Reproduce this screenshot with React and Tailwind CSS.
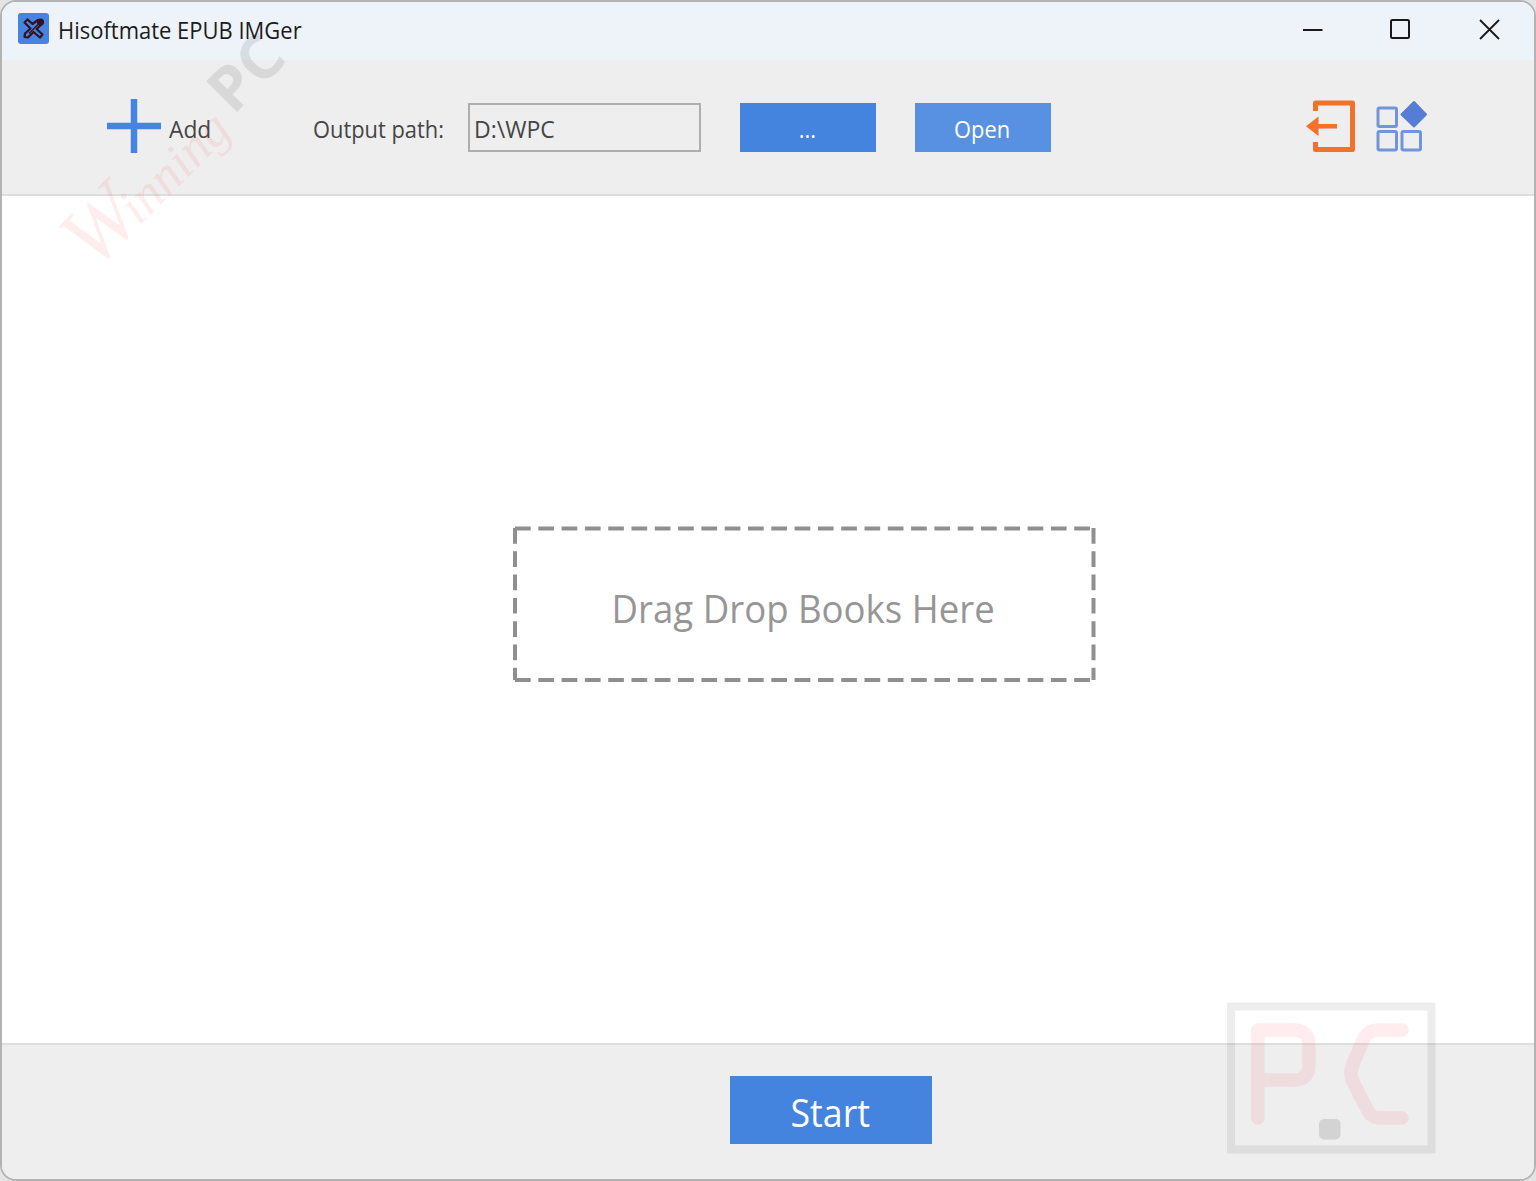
import React from 'react';

const AppIcon = () => (
  <svg className="w-[31px] h-[31px]" viewBox="0 0 31 31" fill="none">
    <rect width="31" height="31" rx="3" fill="#4584e3" />
    <g stroke="#33121d" strokeWidth="2.2" strokeLinejoin="round">
      <path d="M6.500 9.500L9.500 6.500L14.500 11L20 7L24 11L18.500 16L24.500 21.500L22 24.500L15.500 19L10 24.500L6.500 24L7 20.500L12.500 15.500Z" />
      <path d="M11 20.500L20.500 11" strokeWidth="1.5" />
      <circle cx="22.500" cy="9" r="2.500" fill="#33121d" />
    </g>
  </svg>
);

const ExitIcon = () => (
  <svg className="w-[50px] h-[54px]" viewBox="0 0 50 54" fill="none">
    <path d="M9.5 12V4H46.5V50.5H9.5V43" stroke="#f2712b" strokeWidth="5" strokeLinejoin="round" />
    <path d="M10 27.3H31" stroke="#f2712b" strokeWidth="4.5" />
    <path d="M0 27.3L12.5 17.5V37Z" fill="#f2712b" />
  </svg>
);

const AppsIcon = () => (
  <svg className="w-[52px] h-[54px]" viewBox="0 0 52 54" fill="none">
    <g stroke="#7394dd" strokeWidth="3">
      <rect x="2" y="9" width="18.5" height="18.5" rx="1.5" />
      <rect x="2" y="32.5" width="18.5" height="18.5" rx="1.5" />
      <rect x="26" y="32.5" width="18.5" height="18.5" rx="1.5" />
    </g>
    <path d="M38 3L50 15.5L38 27.5L25.5 15.5Z" fill="#567dd5" stroke="#567dd5" strokeWidth="2" strokeLinejoin="round" />
  </svg>
);

const WindowControls = () => (
  <svg className="w-[200px] h-[24px]" viewBox="0 0 200 24" fill="none" stroke="#191919" strokeWidth="2">
    <path d="M3 13H22.5" />
    <rect x="91" y="3" width="18" height="18" rx="1.5" />
    <path d="M180 3L199 22M199 3L180 22" strokeWidth="1.8" />
  </svg>
);

const DropZone = () => (
  <div className="relative w-[584px] h-[156px] flex items-center justify-center">
    <svg className="absolute inset-0 w-full h-full" viewBox="0 0 584 156" stroke="#8f8f8f" strokeWidth="4" strokeDasharray="15.7 7.6">
      <path d="M2 2.4H577" />
      <path d="M2 2V154" />
      <path d="M2 154H577" />
      <path d="M580.5 2V154" />
    </svg>
    <span className="mt-[7px] mr-[3px] text-[38px] leading-[52px] text-[#969696] whitespace-nowrap scale-x-[0.962]">
      Drag Drop Books Here
    </span>
  </div>
);

const Watermarks = () => (
  <div className="absolute inset-0 pointer-events-none">
    <svg className="w-full h-full" viewBox="0 0 1536 1181" fill="none">
      <g transform="translate(94 271) rotate(-45)" fill="#ff3030" fillOpacity="0.09">
        <text className="font-['Liberation_Serif',serif] italic text-[52px]">
          <tspan className="text-[86px]">W</tspan>
          <tspan dx="-8">inning</tspan>
        </text>
      </g>
      <g transform="translate(233 116) rotate(-45)">
        <text textLength="79" lengthAdjust="spacingAndGlyphs" className="font-['Open_Sans',sans-serif] font-bold text-[61px]" fill="#000000" fillOpacity="0.09">
          PC
        </text>
      </g>
      {/* Corner badge */}
      <rect x="1231" y="1006.5" width="200.5" height="143" stroke="#000000" strokeOpacity="0.07" strokeWidth="8" />
      <g stroke="#ff3050" strokeOpacity="0.09" strokeWidth="13.5" strokeLinecap="round" strokeLinejoin="round">
        <path d="M1257.8 1118V1030H1294Q1309 1030 1309 1045V1065Q1309 1080 1294 1080H1265" />
        <path d="M1402 1030H1378Q1369 1030 1364 1038L1353 1064Q1349 1073 1353 1082L1368 1111Q1372 1118 1379 1118H1402" />
      </g>
      <rect x="1319" y="1119" width="21.500" height="20.500" rx="5" fill="#000000" fillOpacity="0.11" />
    </svg>
  </div>
);

export default function App() {
  return (
    <div className="relative w-[1536px] h-[1181px] overflow-hidden bg-[#e4e4e4] font-['Open_Sans','Noto_Sans',sans-serif]">
      <div className="w-full h-full flex flex-col rounded-2xl border-2 border-[#b3b3b3] overflow-hidden bg-white">
        {/* Title bar */}
        <header className="h-[58px] shrink-0 bg-[#edf3f9] flex items-start justify-between pl-4 pr-[34px]">
          <div className="flex pt-[11px]">
            <AppIcon />
            <h1 className="ml-[9px] w-[243px] text-[23.500px] leading-[34px] text-[#1c1c1c] whitespace-nowrap origin-left scale-x-[0.935]">
              Hisoftmate EPUB IMGer
            </h1>
          </div>
          <div className="pt-[15px]">
            <WindowControls />
          </div>
        </header>

        {/* Toolbar */}
        <div className="h-[136px] shrink-0 bg-[#eeeeee] border-b-2 border-[#dedede] flex items-center pl-[105px] pr-[106px] pb-[2px] text-[23.500px] leading-[34px] text-[#454545]">
          <button className="flex items-center w-[206px]">
            <svg className="w-[54px] h-[54px] shrink-0" viewBox="0 0 54 54" stroke="#4584e0" strokeWidth="6.500">
              <path d="M0 27H54M27 0V54" />
            </svg>
            <span className="ml-[8px] mt-[6px] origin-left scale-x-[0.97]">Add</span>
          </button>
          <label className="w-[155px] mt-[6px] whitespace-nowrap">
            <span className="inline-block origin-left scale-x-[0.93]">Output path:</span>
          </label>
          <div className="w-[233px] h-[49px] mt-[3px] border-2 border-[#aeaeae] pl-[4px] flex items-center">
            <span className="mt-[3px] origin-left scale-x-[0.98]">D:\WPC</span>
          </div>
          <button className="ml-[39px] mt-[3px] w-[136px] h-[49px] bg-[#4484de] text-white flex items-center justify-center">
            <span className="mt-[3px] mr-px scale-x-[0.93]">...</span>
          </button>
          <button className="ml-[39px] mt-[3px] w-[136px] h-[49px] bg-[#5991e2] text-white flex items-center justify-center">
            <span className="mt-[3px] mr-[2px] scale-x-[0.93]">Open</span>
          </button>
          <div className="ml-auto flex gap-5">
            <ExitIcon />
            <AppsIcon />
          </div>
        </div>

        {/* Book list */}
        <main className="flex-1 flex justify-center pt-[330px] pl-[74px]">
          <DropZone />
        </main>

        {/* Footer */}
        <footer className="h-[136px] shrink-0 bg-[#eeeeee] border-t-2 border-[#dedede] flex justify-center pt-[31px] pl-[126px]">
          <button className="w-[202px] h-[68px] bg-[#4484de] text-white flex items-center justify-center">
            <span className="mt-[4px] mr-[2px] text-[38px] leading-[52px] scale-x-[0.94]">Start</span>
          </button>
        </footer>
      </div>
      <Watermarks />
    </div>
  );
}
